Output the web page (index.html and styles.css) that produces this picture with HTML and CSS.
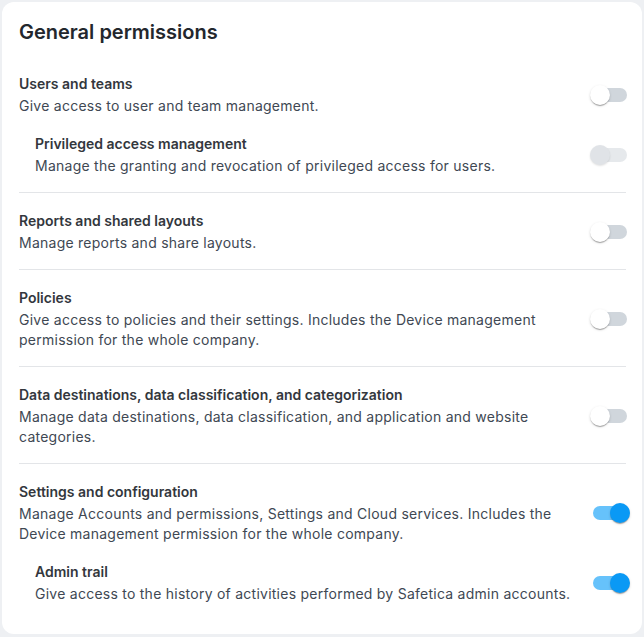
FILE: index.html
```html
<!DOCTYPE html>
<html lang="en">
<head>
<meta charset="utf-8">
<link rel="stylesheet" href="styles.css">
</head>
<body>
<div class="card">
  <h2 class="card-title">General permissions</h2>

  <section class="section">
    <div class="item">
      <div class="text">
        <div class="item-title">Users and teams</div>
        <div class="item-desc">Give access to user and team management.</div>
      </div>
      <span class="switch"><span class="track"></span><span class="thumb"></span></span>
    </div>
    <div class="item sub">
      <div class="text">
        <div class="item-title">Privileged access management</div>
        <div class="item-desc">Manage the granting and revocation of privileged access for users.</div>
      </div>
      <span class="switch disabled"><span class="track"></span><span class="thumb"></span></span>
    </div>
  </section>

  <section class="section">
    <div class="item">
      <div class="text">
        <div class="item-title">Reports and shared layouts</div>
        <div class="item-desc">Manage reports and share layouts.</div>
      </div>
      <span class="switch"><span class="track"></span><span class="thumb"></span></span>
    </div>
  </section>

  <section class="section">
    <div class="item">
      <div class="text">
        <div class="item-title">Policies</div>
        <div class="item-desc">Give access to policies and their settings. Includes the Device management permission for the whole company.</div>
      </div>
      <span class="switch"><span class="track"></span><span class="thumb"></span></span>
    </div>
  </section>

  <section class="section">
    <div class="item">
      <div class="text">
        <div class="item-title">Data destinations, data classification, and categorization</div>
        <div class="item-desc">Manage data destinations, data classification, and application and website categories.</div>
      </div>
      <span class="switch"><span class="track"></span><span class="thumb"></span></span>
    </div>
  </section>

  <section class="section last">
    <div class="item">
      <div class="text">
        <div class="item-title">Settings and configuration</div>
        <div class="item-desc">Manage Accounts and permissions, Settings and Cloud services. Includes the Device management permission for the whole company.</div>
      </div>
      <span class="switch on"><span class="track"></span><span class="thumb"></span></span>
    </div>
    <div class="item sub">
      <div class="text">
        <div class="item-title">Admin trail</div>
        <div class="item-desc">Give access to the history of activities performed by Safetica admin accounts.</div>
      </div>
      <span class="switch on"><span class="track"></span><span class="thumb"></span></span>
    </div>
  </section>
</div>
</body>
</html>
```

FILE: styles.css
```css
* { box-sizing: border-box; }
html, body { margin: 0; padding: 0; }
body {
  background: #eef0f3;
  padding: 2px;
  font-family: Inter, "Noto Sans", sans-serif;
  width: 644px;
  height: 637px;
}
.card {
  background: #ffffff;
  border-radius: 12px;
  width: 640px;
  height: 632px;
  padding: 16px 16px 14px 17px;
}
.card-title {
  margin: 0 0 10px 0;
  font-size: 20px;
  line-height: 28px;
  font-weight: 600;
  color: #23272d;
}
.section {
  padding: 18px 0 16px 0;
  border-bottom: 1px solid #e3e5e8;
  display: flex;
  flex-direction: column;
  gap: 18px;
}
.section.last { border-bottom: none; }
.item {
  display: flex;
  align-items: center;
  justify-content: space-between;
  gap: 12px;
}
.item.sub { padding-left: 16px; }
.text { flex: 1; }
.item-title {
  font-size: 14px;
  line-height: 20px;
  font-weight: 600;
  color: #33373d;
  margin-bottom: 2px;
}
.item-desc {
  font-size: 14px;
  line-height: 20px;
  font-weight: 400;
  color: #404853;
  letter-spacing: 0.25px;
}
.switch {
  position: relative;
  flex: none;
  width: 40px;
  height: 20px;
  margin-right: -4px;
}
.track {
  position: absolute;
  left: 3px;
  top: 3px;
  width: 34px;
  height: 14px;
  border-radius: 7px;
  background: #d0d6dc;
}
.thumb {
  position: absolute;
  left: 0;
  top: 0;
  width: 20px;
  height: 20px;
  border-radius: 50%;
  background: #ffffff;
  box-shadow: 0 2px 1px -1px rgba(0,0,0,.2), 0 1px 1px 0 rgba(0,0,0,.14), 0 1px 3px 0 rgba(0,0,0,.12);
}
.switch.on .track { background: #66c2fb; }
.switch.on .thumb { left: 20px; background: #0a99f5; }
.switch.disabled .track { background: #e6e9ec; }
.switch.disabled .thumb { background: #e0e3e7; box-shadow: 0 1px 2px rgba(0,0,0,.12); }
```
